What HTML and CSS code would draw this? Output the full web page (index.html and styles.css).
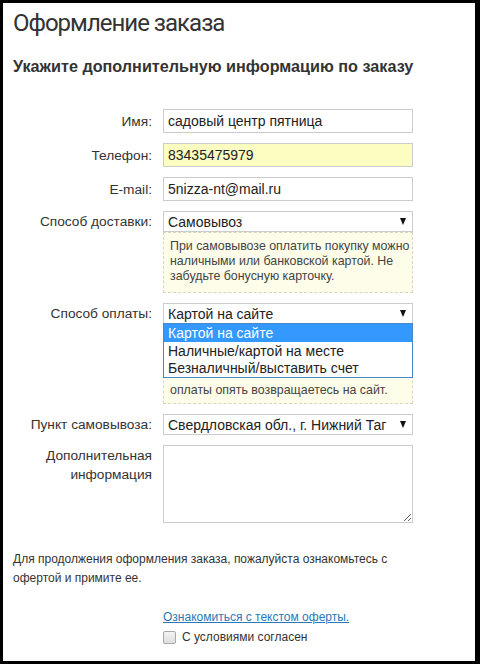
FILE: index.html
```html
<!DOCTYPE html>
<html lang="ru">
<head>
<meta charset="utf-8">
<title>Оформление заказа</title>
<link rel="stylesheet" href="styles.css">
</head>
<body>
<div class="frame">
  <h1 class="title">Оформление заказа</h1>
  <h2 class="subtitle">Укажите дополнительную информацию по заказу</h2>
  <form class="form">
    <label class="lbl">Имя:</label>
    <input class="field" type="text" value="садовый центр пятница">

    <label class="lbl">Телефон:</label>
    <input class="field field-hl" type="text" value="83435475979">

    <label class="lbl">E-mail:</label>
    <input class="field" type="text" value="5nizza-nt@mail.ru">

    <label class="lbl lbl-select">Способ доставки:</label>
    <div class="group">
      <div class="select"><span class="select-text">Самовывоз</span><span class="arrow"></span></div>
      <div class="note">При самовывозе оплатить покупку можно<br>наличными или банковской картой. Не<br>забудьте бонусную карточку.</div>
    </div>

    <label class="lbl lbl-select">Способ оплаты:</label>
    <div class="group group-open">
      <div class="select"><span class="select-text">Картой на сайте</span><span class="arrow"></span></div>
      <ul class="dropdown">
        <li class="opt opt-active">Картой на сайте</li>
        <li class="opt opt-tall">Наличные/картой на месте</li>
        <li class="opt">Безналичный/выставить счет</li>
      </ul>
      <div class="note note-pay">оплаты опять возвращаетесь на сайт.</div>
    </div>

    <label class="lbl">Пункт самовывоза:</label>
    <div class="select"><span class="select-text">Свердловская обл., г. Нижний Таг</span><span class="arrow"></span></div>

    <label class="lbl lbl-top">Дополнительная<br>информация</label>
    <textarea class="area"></textarea>
  </form>

  <p class="offer-text">Для продолжения оформления заказа, пожалуйста ознакомьтесь с<br>офертой и примите ее.</p>

  <div class="accept">
    <a class="offer-link" href="#">Ознакомиться с текстом оферты.</a>
    <label class="agree"><input class="check" type="checkbox"><span>С условиями согласен</span></label>
  </div>
</div>
</body>
</html>
```

FILE: styles.css
```css
html, body {
  margin: 0;
  padding: 0;
  background: #000;
}

body {
  font-family: "Liberation Sans", Arial, sans-serif;
  color: #333;
}

.frame {
  box-sizing: border-box;
  width: 472px;
  height: 658px;
  margin: 3px 5px 3px 3px;
  padding: 6px 10px 0;
  background: #fff;
  overflow: hidden;
}

.title {
  margin: 0;
  font-family: Roboto, "Liberation Sans", sans-serif;
  font-weight: 400;
  font-size: 24px;
  line-height: 28px;
  letter-spacing: -1px;
  color: #333;
}

.subtitle {
  margin: 20px 0 34px;
  font-size: 16.2px;
  line-height: 18px;
  font-weight: bold;
  color: #333;
}

.form {
  display: grid;
  grid-template-columns: 139px 250px;
  column-gap: 11px;
  row-gap: 10px;
  align-items: center;
}

.lbl {
  font-size: 13.7px;
  line-height: 19px;
  text-align: right;
  color: #333;
}

.lbl-select {
  align-self: start;
  line-height: 21px;
}

.lbl-top {
  align-self: start;
  line-height: 19px;
  padding-top: 1px;
}

.field {
  box-sizing: border-box;
  width: 250px;
  height: 24px;
  margin: 0;
  padding: 0 4px;
  border: 1px solid #ccc;
  background: #fff;
  font-family: "Liberation Sans", Arial, sans-serif;
  font-size: 14px;
  color: #222;
  outline: none;
}

.field-hl {
  background: #fcfdc0;
}

.group {
  display: flex;
  flex-direction: column;
  position: relative;
}

.select {
  box-sizing: border-box;
  width: 250px;
  height: 21px;
  display: flex;
  align-items: center;
  padding: 0 6px 0 4px;
  border: 1px solid #ccc;
  background: #fff;
  font-size: 14px;
  color: #222;
}

.select-text {
  flex: 1;
  white-space: nowrap;
  overflow: hidden;
}

.arrow {
  flex: none;
  width: 0;
  height: 0;
  margin-left: 8px;
  border-left: 3.5px solid transparent;
  border-right: 3.5px solid transparent;
  border-top: 7px solid #111;
}

.note {
  box-sizing: border-box;
  padding: 6px 4px 8px 6px;
  border: 1px dashed #d6d6c4;
  background: #fdfdea;
  font-size: 12.4px;
  line-height: 15px;
  white-space: nowrap;
  overflow: hidden;
  color: #444;
}

.note-pay {
  padding-top: 58px;
  padding-bottom: 5px;
}

.dropdown {
  position: absolute;
  top: 20px;
  left: 0;
  z-index: 2;
  box-sizing: border-box;
  width: 250px;
  margin: 0;
  padding: 0;
  list-style: none;
  border: 1px solid #4a86c8;
  background: #fff;
  font-size: 14px;
  color: #222;
}

.opt {
  height: 17px;
  line-height: 17px;
  padding: 0 4px;
  white-space: nowrap;
}

.opt-tall {
  height: 18px;
  line-height: 18px;
}

.opt-active {
  height: 18px;
  line-height: 18px;
  background: #3399ff;
  color: #fff;
}

.area {
  box-sizing: border-box;
  width: 250px;
  height: 78px;
  margin: 0;
  border: 1px solid #ccc;
  resize: both;
  font-family: "Liberation Sans", Arial, sans-serif;
  font-size: 13px;
}

.offer-text {
  margin: 27px 0 0;
  font-size: 12px;
  line-height: 19px;
  color: #333;
}

.accept {
  display: flex;
  flex-direction: column;
  align-items: flex-start;
  padding-left: 150px;
  margin-top: 20px;
}

.offer-link {
  font-size: 12px;
  line-height: 19px;
  color: #2a78b8;
  text-decoration: underline;
}

.agree {
  display: flex;
  align-items: center;
  gap: 6px;
  font-size: 12px;
  line-height: 20px;
  color: #333;
}

.check {
  appearance: none;
  -webkit-appearance: none;
  box-sizing: border-box;
  width: 13px;
  height: 13px;
  margin: 0;
  border: 1px solid #a8a8a8;
  border-radius: 2px;
  background: linear-gradient(#f4f4f4, #dedede);
}
```
